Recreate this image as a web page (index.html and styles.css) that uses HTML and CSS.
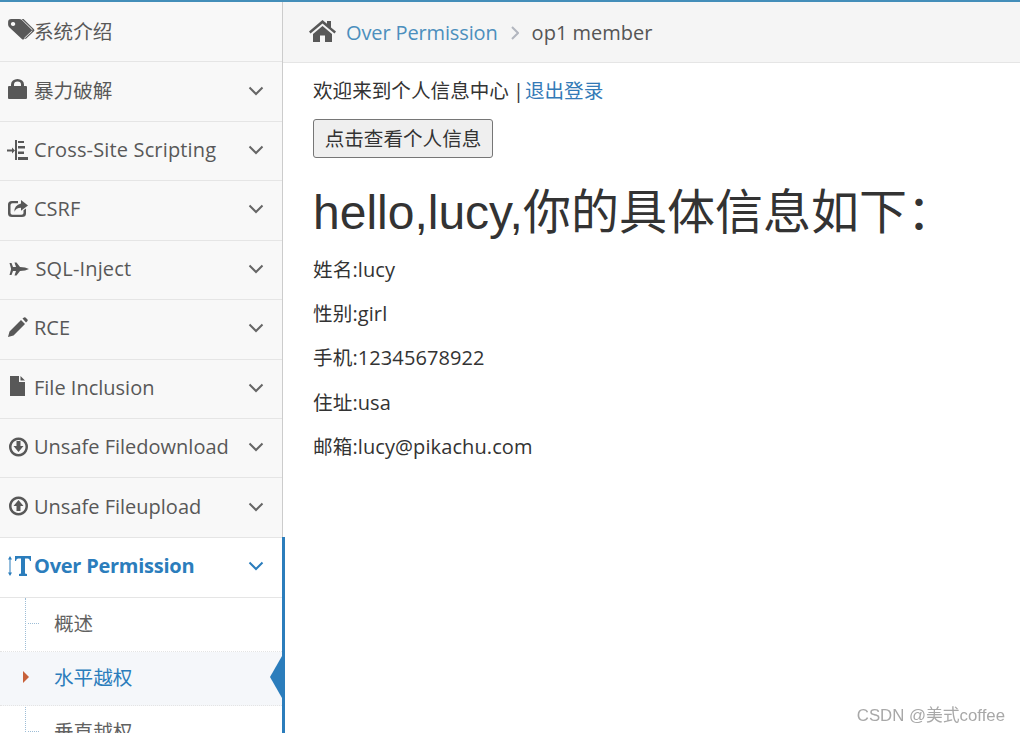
FILE: index.html
```html
<!DOCTYPE html>
<html lang="zh">
<head>
<meta charset="utf-8">
<title>Over Permission</title>
<link rel="stylesheet" href="styles.css">
</head>
<body>
<div class="app">
  <nav class="sidebar">
    <div class="row first">
      <svg class="ico" viewBox="0 0 26 22"><path transform="translate(-1 -1) scale(1.1 1.02)" d="M1 4q0-3 3-3h7q1.500 0 2.500 1l9 9.500q1 1 0 2l-7 7q-1 1-2 0l-11-11q-1.500-1.500-1.500-3zM5.500 3.800a2 2 0 1 0 .01 0zM15 1l9.500 10q1 1 0 2l-7.500 7.500-1.200-1.200 7-7q.8-.8 0-1.500l-9.500-9.800z" fill-rule="evenodd"/></svg>
      <span class="label zh">系统介绍</span>
    </div>
    <div class="row">
      <svg class="ico" viewBox="0 0 26 22"><path fill-rule="evenodd" d="M0 8q0-1 1-1h2V5.500a6.500 5.500 0 0 1 13 0V7h2q1 0 1 1v11q0 1-1 1H1q-1 0-1-1zM6 7h7V5.500a3.500 3 0 0 0-7 0z"/></svg>
      <span class="label zh lift">暴力破解</span>
      <svg class="chev" viewBox="0 0 16 10"><path d="M1.500 1.500L8 8l6.500-6.500"/></svg>
    </div>
    <div class="row">
      <svg class="ico" viewBox="0 0 26 22"><path d="M-1 10.500h5V8.500l3 3-3 3v-2h-5zM7 1h2v20H7zM10 2h6v2h-6zM10 7h7v2.500h-7zM10 12.500h6v2.500h-6zM10 18h10v3H10z"/></svg>
      <span class="label wide">Cross-Site Scripting</span>
      <svg class="chev" viewBox="0 0 16 10"><path d="M1.500 1.500L8 8l6.500-6.500"/></svg>
    </div>
    <div class="row">
      <svg class="ico" viewBox="0 0 26 22"><path transform="translate(-1 .2) scale(1 .9)" d="M5 3h6v2.500H5.500Q3.500 5.500 3.500 7.500v9q0 2 2 2h9q2 0 2-2v-3l2.500-2v5.500Q19 21 15 21H5Q1 21 1 17V7q0-4 4-4zM14 2l7 6-7 6v-3.500Q9 10.500 7.500 15 7 8 14 6z"/></svg>
      <span class="label">CSRF</span>
      <svg class="chev" viewBox="0 0 16 10"><path d="M1.500 1.500L8 8l6.500-6.500"/></svg>
    </div>
    <div class="row">
      <svg class="ico plane" viewBox="0 0 27.500 22"><path d="M1.500 6h2l1.500 4H8L6.500 5.500h2L12 10l5 .5 4 1.500-4 1.500-5 .5-3.500 4.500h-2L8 14H5l-1.500 4h-2L3 12.500V11.500z"/></svg>
      <span class="label wide">SQL-Inject</span>
      <svg class="chev" viewBox="0 0 16 10"><path d="M1.500 1.500L8 8l6.500-6.500"/></svg>
    </div>
    <div class="row">
      <svg class="ico" viewBox="0 0 26 22"><path d="M0 20l1.500-5.500L13 3l4 4L5.500 18.500zM14.500 1.500L16 .5q.8-.5 1.500 0l2 2q.5.700 0 1.500L18 5.500z"/></svg>
      <span class="label">RCE</span>
      <svg class="chev" viewBox="0 0 16 10"><path d="M1.500 1.500L8 8l6.500-6.500"/></svg>
    </div>
    <div class="row">
      <svg class="ico" viewBox="0 0 26 22"><path d="M2 0h9v6h6v14H2zM12.500 0L17 4.500h-4.500z"/></svg>
      <span class="label">File Inclusion</span>
      <svg class="chev" viewBox="0 0 16 10"><path d="M1.500 1.500L8 8l6.500-6.500"/></svg>
    </div>
    <div class="row">
      <svg class="ico" viewBox="0 0 26 22"><path fill-rule="evenodd" d="M10.500 1.500a9.500 9.500 0 1 1-.01 0zM10.500 4a7 7 0 1 0 .01 0zM8.500 5h4v5h3l-5 6-5-6h3z"/></svg>
      <span class="label">Unsafe Filedownload</span>
      <svg class="chev" viewBox="0 0 16 10"><path d="M1.500 1.500L8 8l6.500-6.500"/></svg>
    </div>
    <div class="row">
      <svg class="ico" viewBox="0 0 26 22"><path fill-rule="evenodd" d="M10.500 1.500a9.500 9.500 0 1 1-.01 0zM10.500 4a7 7 0 1 0 .01 0zM10.500 5l5 6h-3v5h-4v-5h-3z"/></svg>
      <span class="label">Unsafe Fileupload</span>
      <svg class="chev" viewBox="0 0 16 10"><path d="M1.500 1.500L8 8l6.500-6.500"/></svg>
    </div>
    <div class="row open">
      <svg class="ico" viewBox="0 0 26 22"><path d="M2 1l2 3.500H2.500v13H4L2 21 0 17.500h1.500v-13H0zM7 1h16v5h-1q-.3-2.500-2-2.500h-3V18.500l2 .5V21H11v-2l2-.5V3.500h-3q-1.700 0-2 2.500H7z"/></svg>
      <span class="label">Over Permission</span>
      <svg class="chev" viewBox="0 0 16 10"><path d="M1.500 1.500L8 8l6.500-6.500"/></svg>
    </div>
    <ul class="submenu">
      <li class="subitem">概述</li>
      <li class="subitem current">水平越权</li>
      <li class="subitem">垂直越权</li>
    </ul>
  </nav>
  <main class="main">
    <div class="crumbs">
      <svg class="home" viewBox="0 0 27 22"><path d="M13.500 0l4.500 3.800V1h4v6.500L27 11.500l-1.500 2L13.500 3.500 1.500 13.500 0 11.500zM4 14L13.500 6l9.500 8v8h-7v-6.500h-5V22H4z"/></svg>
      <a class="crumb-link">Over Permission</a>
      <svg class="crumb-sep" viewBox="0 0 8 14"><path d="M1 1l6 6-6 6"/></svg>
      <span class="crumb-text">op1 member</span>
    </div>
    <div class="content">
      <p class="welcome"><span class="zh">欢迎来到个人信息中心</span><span class="pipe">|</span><a class="logout zh">退出登录</a></p>
      <button class="btn" type="button">点击查看个人信息</button>
      <h1 class="title">hello,lucy,你的具体信息如下：</h1>
      <p class="info"><span class="zh">姓名</span>:lucy</p>
      <p class="info"><span class="zh">性别</span>:girl</p>
      <p class="info"><span class="zh">手机</span>:12345678922</p>
      <p class="info"><span class="zh">住址</span>:usa</p>
      <p class="info"><span class="zh">邮箱</span>:lucy@pikachu.com</p>
    </div>
  </main>
  <div class="mark">CSDN @美式coffee</div>
</div>
</body>
</html>
```
FILE: styles.css
```css
* { box-sizing: border-box; }
html, body { margin: 0; height: 100%; }
body { font-family: "Open Sans", "Noto Sans CJK SC", sans-serif; font-size: 20px; color: #393939; background: #fff; overflow: hidden; }
.zh { font-size: 19.600px; }
.app { position: relative; display: flex; height: 733px; overflow: hidden; border-top: 2px solid #438eb9; }
.sidebar { flex: 0 0 283px; width: 283px; height: 731px; background: #f8f8f8; border-right: 1px solid #ccc; position: relative; }
.row { display: flex; align-items: center; height: 59.450px; padding: 0 0 3px 8px; border-bottom: 1px solid #e5e5e5; color: #585858; font-size: 20px; }
.row.first { height: 60.400px; }
.row.open { height: 60px; }
.ico { width: 26px; height: 22px; flex: none; fill: #585858; overflow: visible; }
.plane { width: 27.500px; }
.label { white-space: nowrap; flex: 1; }
.lift { padding-bottom: 2px; }
.wide { letter-spacing: .15px; }
.chev { width: 16px; height: 10px; flex: none; margin: 1px 18px 0 0; fill: none; stroke: #666; stroke-width: 2; }
.row.open { background: #fff; color: #2b7dbc; font-weight: 700; position: relative; }
.row.open .label { letter-spacing: -.25px; }
.row.open .ico { fill: #2b7dbc; }
.row.open .chev { stroke: #2b7dbc; }
.row.open::after { content: ""; position: absolute; right: -3px; top: -1px; bottom: -1px; width: 3px; background: #2b7dbc; }
.submenu { list-style: none; margin: 0; padding: 0; background: #fff; position: relative; }
.submenu::before { content: ""; position: absolute; left: 25px; top: 0; bottom: 0; border-left: 1px dotted #9dbdd6; }
.subitem { position: relative; height: 54px; padding-left: 54px; font-size: 19.600px; line-height: 52px; color: #616161; border-bottom: 1px dotted #e4e4e4; }
.subitem::before { content: ""; position: absolute; left: 28px; top: 25px; width: 11px; border-top: 1px dotted #9dbdd6; }
.subitem.current { background: #f5f7fa; color: #2b7dbc; }
.subitem.current::before { left: 23px; top: 19px; width: 0; border-top: 6px solid transparent; border-bottom: 6px solid transparent; border-left: 6px solid #c86139; }
.subitem.current::after { content: ""; position: absolute; right: 0; top: 4px; border: 21px solid transparent; border-left: 0; border-right: 12px solid #2b7dbc; height: 0; }
.submenu::after { content: ""; position: absolute; right: -3px; top: 0; bottom: 0; width: 3px; background: #2b7dbc; }
.main { flex: 1; min-width: 0; }
.crumbs { display: flex; align-items: center; height: 61px; padding-left: 26px; background: #f5f5f5; border-bottom: 1px solid #e5e5e5; }
.home { width: 27px; height: 22px; flex: none; fill: #585858; margin-right: 10px; margin-top: -2px; }
.crumb-link { color: #4c8fbd; letter-spacing: -.13px; }
.crumb-sep { width: 8px; height: 14px; margin: 2px 13px 0; fill: none; stroke: #b2b6bf; stroke-width: 2; }
.crumb-text { color: #555; }
.content { padding: 14px 0 0 30px; }
.welcome { margin: 0 0 14px; line-height: 28px; color: #333; }
.pipe { margin: 0 1px 0 4px; font-size: 20px; }
.logout { color: #337ab7; }
.btn { display: block; width: 180px; height: 39px; padding: 0 0 2px; font-family: inherit; font-size: 19.600px; color: #333; background: #efefef; border: 1px solid #767676; border-radius: 3px; }
.title { margin: 20px 0 8px; font-family: "Liberation Sans", "Noto Sans CJK SC", sans-serif; font-size: 48px; line-height: 70px; font-weight: 400; color: #333; white-space: nowrap; }
.info { margin: 0 0 15.500px; line-height: 28.700px; color: #333; letter-spacing: .1px; }
.mark { position: absolute; right: 15px; bottom: 7px; font-family: "Liberation Sans", "Noto Sans CJK SC", sans-serif; font-size: 16.800px; color: #a8a8a8; filter: blur(.3px); }
```
